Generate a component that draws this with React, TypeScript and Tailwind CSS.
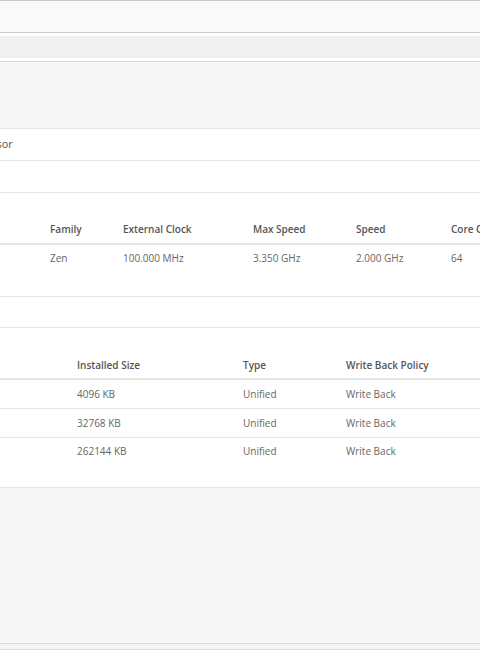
const font = { fontFamily: "'Open Sans', 'Noto Sans', sans-serif" }

const cpuCols = [
  { label: "Family", value: "Zen", w: "w-[73px]" },
  { label: "External Clock", value: "100.000 MHz", w: "w-[130px]" },
  { label: "Max Speed", value: "3.350 GHz", w: "w-[103px]" },
  { label: "Speed", value: "2.000 GHz", w: "w-[95px]" },
  { label: "Core Count", value: "64", w: "w-[90px]" },
]

const cacheRows = [
  { size: "4096 KB", type: "Unified", policy: "Write Back" },
  { size: "32768 KB", type: "Unified", policy: "Write Back" },
  { size: "262144 KB", type: "Unified", policy: "Write Back" },
]

export default function App() {
  return (
    <div className="h-[650px] w-[480px] overflow-hidden bg-[#f7f7f7] text-[10px] text-[#666]" style={font}>
      {/* toolbar */}
      <div className="h-[33px] border-y border-[#cacaca] bg-[#f9f9f9]" />
      {/* tab strip */}
      <div className="h-[29px] border-b border-[#d8d8d8] bg-white py-[3px]">
        <div className="h-[22px] bg-[#eff0f0]" />
      </div>
      <div className="h-[66px]" />

      {/* processor card */}
      <div className="overflow-hidden border-y border-[#e6e6e6] bg-white">
        <div className="flex h-[32px] items-center border-b border-[#e6e6e6] text-[11px] text-[#555]">
          <span className="-ml-[38px]">Processor</span>
        </div>
        <div className="h-[32px] border-b border-[#e6e6e6]" />
        <div className="flex h-[52px] items-end border-b-2 border-[#e6e6e6] pb-[6px] pl-[50px] font-semibold text-[#555]">
          {cpuCols.map((c) => (
            <div key={c.label} className={`${c.w} shrink-0 whitespace-nowrap`}>{c.label}</div>
          ))}
        </div>
        <div className="flex h-[51px] items-start pt-[6px] pl-[50px]">
          {cpuCols.map((c) => (
            <div key={c.label} className={`${c.w} shrink-0 whitespace-nowrap`}>{c.value}</div>
          ))}
        </div>
      </div>

      {/* cache card */}
      <div className="border-b border-[#e6e6e6] bg-white">
        <div className="h-[31px] border-b border-[#e6e6e6]" />
        <div className="flex h-[52px] items-end border-b-2 border-[#e6e6e6] pb-[5px] pl-[77px] font-semibold text-[#555]">
          <div className="w-[166px] shrink-0">Installed Size</div>
          <div className="w-[103px] shrink-0">Type</div>
          <div className="w-[120px] shrink-0 whitespace-nowrap">Write Back Policy</div>
        </div>
        {cacheRows.map((r, i) => (
          <div
            key={r.size}
            className={`flex pl-[77px] ${i < 2 ? "h-[29px] border-b border-[#e6e6e6] items-center" : "h-[49px] items-start pt-[6px]"}`}
          >
            <div className="w-[166px] shrink-0">{r.size}</div>
            <div className="w-[103px] shrink-0">{r.type}</div>
            <div className="w-[120px] shrink-0">{r.policy}</div>
          </div>
        ))}
      </div>

      <div className="h-[155px]" />
      <div className="h-[7px] border-y border-[#dcdcdc] bg-[#f4f4f4]" />
    </div>
  )
}
